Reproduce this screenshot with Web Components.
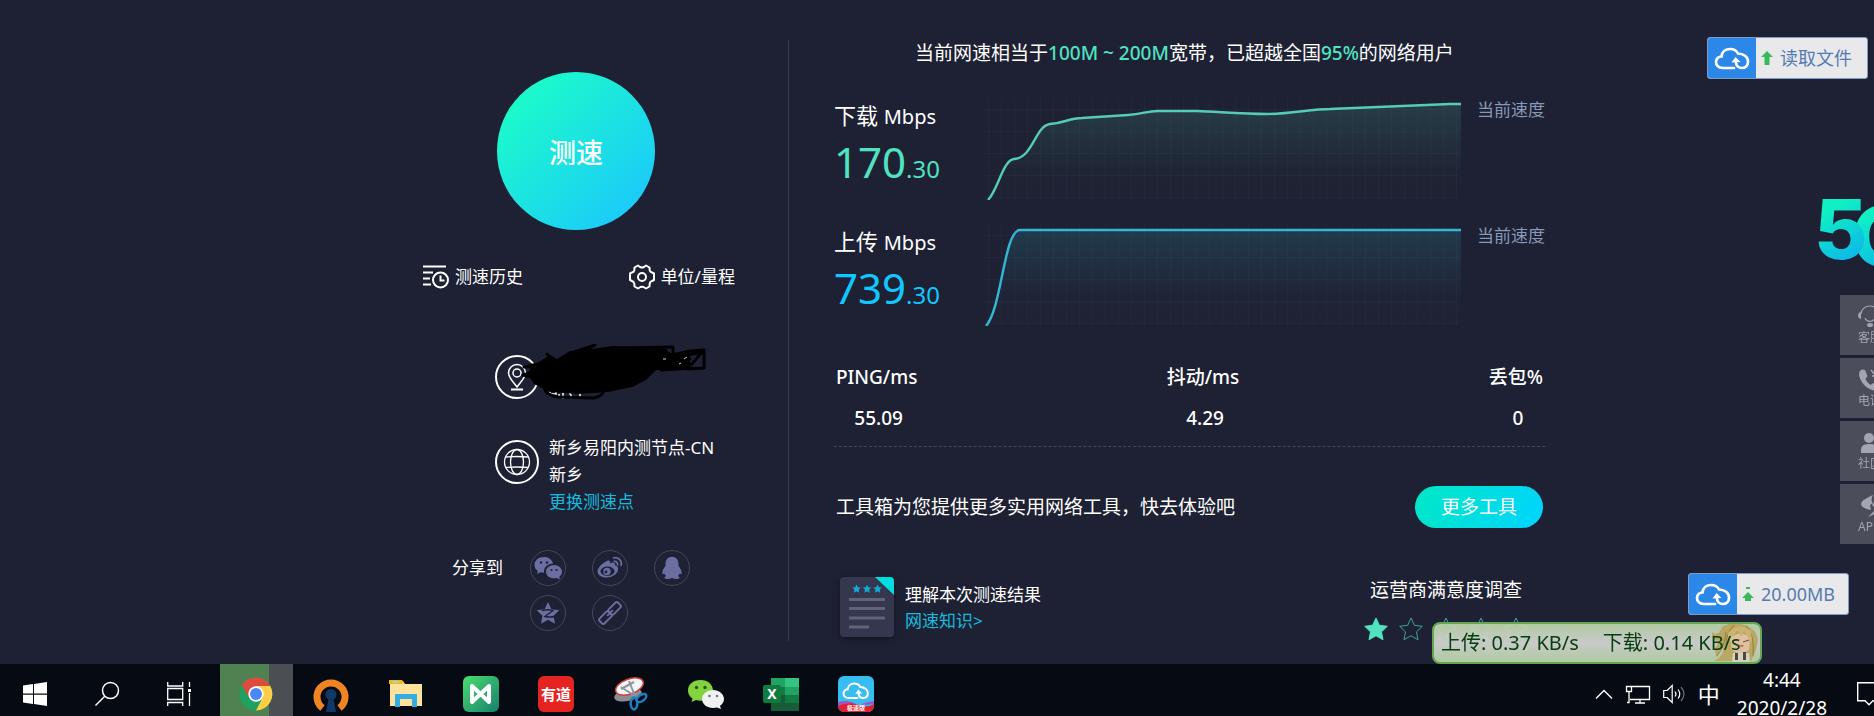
<!DOCTYPE html>
<html lang="zh-CN">
<head>
<meta charset="utf-8">
<title>测速</title>
<style>
  :root {
    --bg: #1e2133;
    --green: #50e3c2;
    --blue: #10c8ff;
    --link: #14bbdf;
  }

  * {
    box-sizing: border-box;
  }

  body {
    margin: 0;
    height: 100vh;
    display: flex;
    flex-direction: column;
    overflow: hidden;
    background: var(--bg);
    color: #fff;
    font: 17px/26px "Noto Sans", "Noto Sans CJK SC", sans-serif;
  }

  main {
    flex: 1;
    min-height: 0;
    display: grid;
    grid-template-columns: 421fr 579fr;
    padding: 40px 0 27px;
  }

  .control {
    border-right: 1px solid #3a3d4e;
    padding: 32px 53px 0 0;
    display: flex;
    justify-content: flex-end;
  }

  .control-inner {
    width: 312px;
  }

  .links {
    display: flex;
    justify-content: space-between;
    margin-top: 34px;
  }

  .places {
    display: grid;
    gap: 31px;
    margin: 59px 0 35px 72px;
  }

  .result {
    padding-left: 45px;
    width: 756px;
    max-width: 100%;
  }

  .meters {
    display: grid;
    gap: 24px;
    margin-top: 32px;
  }

  .bottom {
    display: flex;
    justify-content: space-between;
    margin-top: 49px;
    padding: 0 17px 0 6px;
  }

  .read {
    position: fixed;
    top: 37px;
    right: 6px;
  }

  .size {
    position: fixed;
    bottom: 101px;
    right: 25px;
  }
</style>
</head>
<body>
<main>
  <section class="control">
    <div class="control-inner">
      <start-button>测速</start-button>
      <nav class="links">
        <tool-link icon="history">测速历史</tool-link>
        <tool-link icon="gear">单位/量程</tool-link>
      </nav>
      <div class="places">
        <place-row icon="pin"><ink-mark></ink-mark></place-row>
        <place-row icon="globe" action="更换测速点">新乡易阳内测节点-CN<br>新乡</place-row>
      </div>
      <share-list>分享到</share-list>
    </div>
  </section>
  <section class="result">
    <result-headline></result-headline>
    <div class="meters">
      <speed-meter label="下载" whole="170" part="30" color="#50e3c2" stroke="#55cdb4"
        line="M7 102 C17 92 22 62 33 61 C52 60 54 28 69 26 C84 25 88 20 101 20 L147 17 C162 16 166 13 177 13 H216 C240 14 262 16 286 16 C310 16 330 11 349 11 L469 6 H480"></speed-meter>
      <speed-meter label="上传" whole="739" part="30" color="#10c8ff" stroke="#32b8d4"
        line="M5 102 C21 84 23 6 39 6 H480"></speed-meter>
    </div>
    <ping-stats></ping-stats>
    <more-tools>工具箱为您提供更多实用网络工具，快去体验吧</more-tools>
    <div class="bottom">
      <guide-card></guide-card>
      <rating-survey></rating-survey>
    </div>
  </section>
</main>
<upload-badge class="read" icon="up">读取文件</upload-badge>
<upload-badge class="size" icon="upstep">20.00MB</upload-badge>
<five-g></five-g>
<side-dock></side-dock>
<net-monitor></net-monitor>
<task-bar></task-bar>

<script>
const STAR = "M12 1l3.4 7.3 7.9 1-5.8 5.5 1.5 7.9L12 18.8l-7 3.9 1.5-7.9L.7 9.3l7.9-1z";
const CLOUD = `<path d="M20 21H8.500C4.500 21 2 18 2 15c0-3.200 2.500-5.500 5.500-5.500C8 4.500 12 2 16 2c4 0 6.500 1.500 8 4.500 5.500 0 10 3.500 10 8 0 4-2.500 6.500-6 6.500-3.500 0-6-2-6-5.500" fill="none" stroke="#fff" stroke-width="2.700" stroke-linecap="round"/><path d="M17.500 15.500l4-5.500 5 5z" fill="#fff"/>`;

// name: [width, height, viewBox, markup]
const ICONS = {
  history: [26, 24, "0 0 26 24", `<g fill="none" stroke="#fff" stroke-width="2"><path d="M0 1.500h23M0 7.500h10M0 13.500h7M0 19.500h8"/><circle cx="17.500" cy="15" r="7.500"/><path d="M17.500 10.500v5h4"/></g>`],
  gear: [26, 26, "0 0 26 26", `<g fill="none" stroke="#fff" stroke-width="2" stroke-linejoin="round"><path d="M9 1.500l2 1.500q2 1 4 0l2-1.500 3.500 2 .2 3q.5 1.500 2.300 2l2 1v6.500l-2 1q-2 .5-2.300 2.500l-.2 3-3.500 2-2.500-1.500q-1.500-.7-3 0L9 24.500l-3.500-2-.2-3q-.5-1.700-2.300-2.500L1 16V9.500l2-1q2-.5 2.300-2l.2-3z"/><circle cx="13" cy="13" r="4"/></g>`],
  pin: [44, 44, "0 0 44 44", `<g fill="none" stroke="#fff"><circle cx="22" cy="22" r="21" stroke-width="2"/><path d="M22 32C18 26.500 13.500 22.500 13.500 18a8.500 8.500 0 0 1 17 0C30.500 22.500 26 26.500 22 32z" stroke-width="1.500"/><circle cx="22" cy="18" r="4" stroke-width="1.500"/><path d="M16 34.500h12" stroke-width="2"/></g>`],
  globe: [44, 44, "0 0 44 44", `<g fill="none" stroke="#fff"><circle cx="22" cy="22" r="21" stroke-width="2"/><g stroke-width="1.300"><circle cx="22" cy="22" r="12.500"/><ellipse cx="22" cy="22" rx="6.500" ry="12.500"/><path d="M11 17q11-1 22 0M11 27.500q11-1 22 0"/></g></g>`],
  wechat: [28, 24, "0 0 28 24", `<g fill="#6b6ea1"><path d="M10 1C4.500 1 .5 4.500.5 9c0 2.500 1.300 4.500 3.300 6L3 18l3.500-1.800c1 .3 2.300.5 3.500.4C9.500 11 14 7.500 19 7.500 18 3.500 14.500 1 10 1z"/><path d="M20 9c-4.500 0-8 3-8 6.700s3.500 6.600 8 6.600c1 0 2-.2 2.800-.4L26 23.500l-.8-2.700C27 19.600 28 17.700 28 15.700 28 12 24.500 9 20 9z"/></g><g fill="#1e2133"><circle cx="7" cy="6.500" r="1.200"/><circle cx="13" cy="6.500" r="1.200"/><circle cx="17.500" cy="14" r="1.100"/><circle cx="22.500" cy="14" r="1.100"/></g>`],
  weibo: [26, 24, "0 0 26 24", `<path d="M10 5c2-1 3.500 0 3 2.300 3-1.300 5.500-1 5 2 2.700.8 3.500 2.500 3 4.700-.8 4.300-6 7.500-11.500 7.500C4.500 21.500.5 19 .5 15.500.5 11.500 6 6.500 10 5z" fill="#6b6ea1"/><ellipse cx="10.500" cy="15.200" rx="7" ry="4.700" fill="#1e2133"/><circle cx="10" cy="15.500" r="3.700" fill="#6b6ea1"/><circle cx="9" cy="16" r="1.400" fill="#1e2133"/><path d="M16.500 5.500c3-.5 4.500 1.500 4 4M16 2c5-1.500 9.500 2.500 8 8" fill="none" stroke="#6b6ea1" stroke-width="1.700"/>`],
  qq: [24, 24, "0 0 24 24", `<path d="M12 .8c4 0 6.500 3 6.500 7v2c1.500 2 3.300 5 3.300 7.300 0 1.400-1 1.300-2 .1-.3 1-1 2-1.800 2.800 1 .5 1.500 1 1.500 1.700 0 1.800-5.500 1.800-7 .3h-1c-1.500 1.500-7 1.500-7-.3 0-.7.5-1.200 1.500-1.700-.8-.8-1.500-1.800-1.800-2.800-1 1.200-2 1.300-2-.1 0-2.300 1.800-5.300 3.300-7.300v-2c0-4 2.500-7 6.500-7z" fill="#6b6ea1"/>`],
  qzone: [24, 24, "0 0 24 24", `<path d="${STAR}" fill="#6b6ea1"/><path d="M6 9.500q6-1.500 11 0l-8 6q5 1 9.500 0" fill="none" stroke="#1e2133" stroke-width="1.300"/>`],
  chain: [24, 24, "0 0 24 24", `<g fill="none" stroke="#6b6ea1" stroke-width="1.900" transform="rotate(-45 12 12)"><rect x="-1" y="8.500" width="13" height="7" rx="2"/><rect x="12" y="8.500" width="13" height="7" rx="2"/><path d="M8 12h8"/></g>`],
  doc: [54, 61, "0 0 54 61", `<path d="M4 0h33l17 17v39q0 4-4 4H4q-4 0-4-4V4q0-4 4-4z" fill="#34374d"/><path d="M35 0h15q4 0 4 4v14z" fill="#00dfe0"/><g fill="#13abd8"><path transform="translate(12 7) scale(.38)" d="${STAR}"/><path transform="translate(22.500 7) scale(.38)" d="${STAR}"/><path transform="translate(33 7) scale(.38)" d="${STAR}"/></g><path d="M9 22.500h36M9 31.500h36M9 41h36M9 50h20" stroke="#60637c" stroke-width="3"/>`],
  cloud: [36, 23, "0 0 36 23", CLOUD],
  up: [12, 14, "0 0 12 14", `<path d="M6 0l6 6H8.500v8h-5V6H0z" fill="#38b95c"/>`],
  upstep: [12, 14, "0 0 12 14", `<path d="M4 0h4v2H4zM6 5l6 6H9v3H3v-3H0z" fill="#38b95c"/>`],
  headset: [24, 22, "0 0 24 22", `<g fill="none" stroke="#a3a6b1" stroke-width="1.200"><path d="M3 8a9 8 0 0 1 18 0M7 12c2 4.500 8 4.500 10 0"/></g><g fill="#a3a6b1"><path d="M3 6v7q-3-.5-3-3.500T3 6zM21 6v7q3-.5 3-3.500T21 6z"/><ellipse cx="12" cy="19" rx="3" ry="2"/></g>`],
  phone: [24, 22, "0 0 24 22", `<path d="M3 1Q0 3 1.500 8c2 6 6.500 11 12.500 13 4 1 6-.5 6.500-3l-5-4-3 2Q9 13.500 7.500 10l2-3L7 1Q5 0 3 1z" fill="#a3a6b1"/><path d="M13 1l4 5M14 7h6" stroke="#a3a6b1" stroke-width="1.500"/>`],
  people: [24, 22, "0 0 24 22", `<g fill="#a3a6b1"><circle cx="11" cy="6" r="5"/><path d="M3 21v-3q0-6 7-6h3q7 0 7 6v3z"/></g>`],
  bolt: [24, 22, "0 0 24 22", `<path d="M15 0Q3 5 3 9t10 6l-1-5 3-2q-3-3 0-8zM17 6l-3 4 4 4-8 8q13-5 13-9t-6-7z" fill="#a3a6b1"/>`],
  windows: [24, 24, "0 0 24 24", `<path d="M0 3.500l10-1.400V11.500H0zM11 2l13-2v11.500H11zM0 12.700h10v9.200L0 20.500zM11 12.700h13V24L11 22z" fill="#fff"/>`],
  search: [24, 24, "0 0 24 24", `<g fill="none" stroke="#fff" stroke-width="1.500"><circle cx="15.500" cy="8.500" r="8"/><path d="M9.500 14.500L.5 23.500"/></g>`],
  taskview: [24, 24, "0 0 24 24", `<g fill="none" stroke="#fff" stroke-width="1.300"><path d="M.7 0v4h15V0M.7 6.500h15v11h-15zM.7 24v-3.500h15V24M22.500 0v5M22.500 11v13"/></g><path d="M21 7h3v3h-3z" fill="#fff"/>`],
  chrome: [34, 34, "0 0 34 34", `<circle cx="17" cy="17" r="16.500" fill="#1da261"/><path d="M17 17L2.700 8.700A16.500 16.500 0 0 1 31.300 9z" fill="#dd4b3e"/><path d="M17 9h14.300A16.500 16.500 0 0 1 17 33.500L24 20z" fill="#ffce44"/><path d="M2.700 8.700L10 21l7-4V9z" fill="#dd4b3e"/><path d="M2.700 8.700l7.400 12.500L17 25l-1 8.500A16.500 16.500 0 0 1 2.700 8.700z" fill="#1da261"/><circle cx="17" cy="17" r="7.700" fill="#fff"/><circle cx="17" cy="17" r="6" fill="#4a88f5"/>`],
  vpn: [36, 35, "0 0 36 35", `<path d="M9.500 31A14 14 0 1 1 26.500 31" fill="none" stroke="#f08423" stroke-width="7"/><circle cx="18" cy="17.500" r="5.500" fill="#113967"/><path d="M16 20h4l3 15H13z" fill="#113967"/>`],
  folder: [34, 28, "0 0 34 28", `<path d="M1 1h13l2 3h17v22H1z" fill="#ffe39a"/><path d="M0 0h13l2 3-2 1H0z" fill="#f4b722"/><path d="M3 1h7v2H3z" fill="#a9d7b0"/><path d="M6 14h22v13h-5v-8H11v8H6z" fill="#32aee6"/>`],
  mind: [36, 36, "0 0 36 36", `<defs><linearGradient id="m" x2="1" y2="1"><stop stop-color="#4bdd70"/><stop offset="1" stop-color="#16806c"/></linearGradient></defs><rect width="36" height="36" rx="6" fill="url(#m)"/><path d="M9 26V10l17 16V10L9 26z" fill="none" stroke="#fff" stroke-width="4" stroke-linejoin="round"/>`],
  youdao: [36, 36, "0 0 36 36", `<rect width="36" height="36" rx="6" fill="#e52320"/><text x="18" y="24" text-anchor="middle" font-size="15" font-weight="bold" fill="#fff">有道</text>`],
  snip: [34, 34, "0 0 34 34", `<ellipse cx="14" cy="18" rx="14" ry="6" transform="rotate(-12 14 18)" fill="#8b8d94"/><ellipse cx="15.500" cy="9.500" rx="14.500" ry="7.500" transform="rotate(-20 15.500 9.500)" fill="#f4f5f7" stroke="#cf3a35" stroke-width="1.500"/><path d="M7 12l13-7M15 4l6 15M7 10l14 9" stroke="#8f959e" stroke-width="2"/><g fill="none" stroke="#1c7fc4" stroke-width="2.500"><ellipse cx="20" cy="26.500" rx="3.300" ry="6"/><ellipse cx="27.500" cy="21" rx="3" ry="5.500" transform="rotate(-125 27.500 21)"/></g>`],
  weixin: [37, 30, "0 0 37 30", `<path d="M13.500 1C6 1 1 5.500 1 11.500c0 3.500 1.700 6 4.500 8L4.500 23l4.500-2c1.500.5 3 .7 4.500.7 7 0 12.500-4.500 12.500-10.200S21 1 13.500 1z" fill="#82d43d"/><path d="M26 11c-6 0-11 4-11 9s5 9 11 9l4-.6 4 1.600-1-3.300c2.500-1.500 4-4 4-6.700 0-5-5-9-11-9z" fill="#eff1f2"/><g fill="#34531e"><circle cx="9.500" cy="8.500" r="1.700"/><circle cx="18" cy="8.500" r="1.700"/></g><g fill="#777"><circle cx="22.500" cy="17" r="1.300"/><circle cx="30" cy="17" r="1.300"/></g>`],
  excel: [36, 33, "0 0 36 33", `<path d="M8 0h14v9H8z" fill="#21a366"/><path d="M22 0h14v9H22z" fill="#33c481"/><path d="M8 9h14v8H8z" fill="#107c41"/><path d="M22 9h14v8H22z" fill="#21a366"/><path d="M8 17h28v16H8z" fill="#185c37"/><path d="M22 17h14v8H22z" fill="#107c41"/><rect y="7" width="18" height="18" rx="2" fill="#0f7b40"/><text x="9" y="21" text-anchor="middle" font-size="14" font-weight="bold" fill="#fff">X</text>`],
  speedy: [36, 36, "0 0 36 36", `<clipPath id="s"><rect width="36" height="36" rx="6"/></clipPath><g clip-path="url(#s)"><path d="M0 0h36v36H0z" fill="#37bdf0"/><path d="M0 28q9-5 18 0t18 0v8H0z" fill="#e3202d"/><path d="M0 26q9-3 18 2-9-2-18 2zM36 25q-9 1-14 4 8 0 14-1z" fill="#9b58c0"/></g><g transform="translate(4 6) scale(.76)">${CLOUD}</g><text x="18" y="34" text-anchor="middle" font-size="6" font-weight="bold" fill="#fff">极速版</text>`],
  chevron: [18, 10, "0 0 18 10", `<path d="M1 9.500l8-8 8 8" fill="none" stroke="#fff" stroke-width="1.400"/>`],
  network: [24, 19, "0 0 24 19", `<path d="M6 1.500h17.500v13H4M9 18h10M14 14.500V18M.5 1.500h5v5h-5zM3 6.500v11H1" fill="none" stroke="#fff" stroke-width="1.300"/>`],
  volume: [22, 20, "0 0 22 20", `<g fill="none" stroke="#fff" stroke-width="1.200"><path d="M.7 6.500h3.500l5-5v17l-5-5H.7z"/><path d="M12 7.500q2 2.500 0 5M15 5.500q3.500 4.500 0 9"/><path d="M18 3q6 7 0 14" stroke="#6a6f78"/></g>`],
  notice: [28, 24, "0 0 28 24", `<path d="M.7.700h26v18H16l-4 4-4-4H.7z" fill="none" stroke="#fff" stroke-width="1.400"/>`]
};

class AppIcon extends HTMLElement {
  constructor() {
    super();
    this.attachShadow({ mode: "open" });
  }

  connectedCallback() {
    const [w, h, box, markup] = ICONS[this.getAttribute("name")];
    this.shadowRoot.innerHTML = `
      <style>
        :host { display: block; flex: none; }
        svg { display: block; overflow: visible; }
      </style>
      <svg width="${w}" height="${h}" viewBox="${box}" aria-hidden="true">${markup}</svg>
    `;
  }
}

class StartButton extends HTMLElement {
  constructor() {
    super();
    this.attachShadow({ mode: "open" });
    this.shadowRoot.innerHTML = `
      <style>
        :host {
          display: flex;
          justify-content: center;
          padding-right: 6px;
        }

        button {
          width: 158px;
          height: 158px;
          padding: 4px 0 0;
          border: 0;
          border-radius: 50%;
          background: linear-gradient(135deg, #1bfacb 15%, #1cccf8 85%);
          color: #fff;
          font: 500 27px/36px "Noto Sans", "Noto Sans CJK SC", sans-serif;
        }
      </style>
      <button type="button"><slot></slot></button>
    `;
  }
}

class ToolLink extends HTMLElement {
  constructor() {
    super();
    this.attachShadow({ mode: "open" });
  }

  connectedCallback() {
    this.shadowRoot.innerHTML = `
      <style>
        :host { display: block; }

        a {
          display: flex;
          align-items: center;
          gap: 6px;
          color: #fff;
          text-decoration: none;
        }
      </style>
      <a href="#"><app-icon name="${this.getAttribute("icon")}"></app-icon><span><slot></slot></span></a>
    `;
  }
}

class PlaceRow extends HTMLElement {
  constructor() {
    super();
    this.attachShadow({ mode: "open" });
  }

  connectedCallback() {
    const action = this.getAttribute("action");
    this.shadowRoot.innerHTML = `
      <style>
        :host {
          display: flex;
          gap: 10px;
          min-height: 54px;
          line-height: 27px;
          white-space: nowrap;
        }

        app-icon { margin-top: 6px; }

        a {
          display: block;
          color: var(--link);
          text-decoration: none;
        }
      </style>
      <app-icon name="${this.getAttribute("icon")}"></app-icon>
      <div><slot></slot>${action ? `<a href="#">${action}</a>` : ""}</div>
    `;
  }
}

// Hand-drawn pen strokes that cover the address
class InkMark extends HTMLElement {
  constructor() {
    super();
    this.attachShadow({ mode: "open" });
    this.shadowRoot.innerHTML = `
      <style>
        :host { display: block; position: relative; }
        svg { position: absolute; left: -28px; top: -5px; }
      </style>
      <svg width="190" height="60" viewBox="0 0 190 60" aria-hidden="true">
        <path d="M29 42v8M29 43h5v3h-5h6v4h-6M38 50v4M42 48v7M48 48l3 5v2M54 48h8M59 48v6" stroke="#fff" stroke-width="1.500" fill="none"/>
        <path d="M29 11l7 4 13-8 22-2 20-3 20 1 20-1 14 3 4 4 20 0v16l-34 1-10 10-14 7-24 5-30 2-28-2-16-8-6-10 3-7z"/>
        <g fill="none" stroke="#000" stroke-width="3" stroke-linejoin="round" stroke-linecap="round">
          <path d="M30 17L3 23l30-1L2 31l34 8M26 10l8 8M50 9l24-8-14 8M100 4l52-1v8l17-4 14-1v18l-16 1v-14l14-3-10 12-28 2M127 12l40-3-30 12 32-6M40 40l-15 3c-4 5 5 9 12 10l35 1c8-1 12-5 11-12M140 26l32-2"/>
        </g>
        <path d="M142 15h3M163 15l3-2M158 20l2-1" stroke="#c9cbd3"/>
      </svg>
    `;
  }
}

class ShareList extends HTMLElement {
  constructor() {
    super();
    this.attachShadow({ mode: "open" });
    const targets = [["wechat", "微信"], ["weibo", "微博"], ["qq", "QQ"], ["qzone", "QQ空间"], ["chain", "复制链接"]];
    this.shadowRoot.innerHTML = `
      <style>
        :host {
          display: flex;
          gap: 27px;
          padding-left: 29px;
          line-height: 36px;
        }

        div {
          display: grid;
          grid-template-columns: repeat(3, 36px);
          gap: 9px 26px;
        }

        a {
          height: 36px;
          box-sizing: border-box;
          display: flex;
          align-items: center;
          justify-content: center;
          border: 1px solid #444659;
          border-radius: 50%;
        }
      </style>
      <span><slot></slot></span>
      <div>${targets.map(([icon, name]) => `<a href="#" aria-label="${name}"><app-icon name="${icon}"></app-icon></a>`).join("")}</div>
    `;
  }
}

class ResultHeadline extends HTMLElement {
  constructor() {
    super();
    this.attachShadow({ mode: "open" });
    this.shadowRoot.innerHTML = `
      <style>
        :host {
          display: block;
          padding-right: 10px;
          font-size: 19px;
          text-align: center;
          white-space: nowrap;
        }

        b {
          color: var(--green);
          font-weight: 500;
        }
      </style>
      当前网速相当于<b>100M ~ 200M</b>宽带，已超越全国<b>95%</b>的网络用户
    `;
  }
}

class SpeedMeter extends HTMLElement {
  constructor() {
    super();
    this.attachShadow({ mode: "open" });
  }

  grid() {
    let d = "";
    for (let x = 7; x < 480; x += 13) d += `M${x}.5 0V102`;
    for (let y = 11; y < 102; y += 22) d += `M0 ${y}.5H478`;
    return d;
  }

  connectedCallback() {
    const line = this.getAttribute("line");
    const color = this.getAttribute("color");
    const stroke = this.getAttribute("stroke");
    this.shadowRoot.innerHTML = `
      <style>
        :host {
          display: grid;
          grid-template-columns: 147px 1fr 68px;
          height: 102px;
        }

        .name {
          font-size: 22px;
          line-height: 34px;
        }

        .name small { font-size: 20px; }

        .value {
          color: ${color};
          font-size: 42px;
          line-height: 56px;
        }

        .value small { font-size: 24px; }

        svg {
          display: block;
          width: calc(100% - 16px);
          height: 102px;
        }

        .now {
          color: #8799b8;
          line-height: 24px;
        }
      </style>
      <div>
        <div class="name">${this.getAttribute("label")} <small>Mbps</small></div>
        <div class="value">${this.getAttribute("whole")}<small>.${this.getAttribute("part")}</small></div>
      </div>
      <svg viewBox="0 0 480 102" preserveAspectRatio="none" aria-hidden="true">
        <defs>
          <linearGradient id="fade" x2="0" y2="1">
            <stop stop-color="${stroke}" stop-opacity=".16"/>
            <stop offset=".7" stop-color="${stroke}" stop-opacity=".02"/>
            <stop offset="1" stop-color="${stroke}" stop-opacity="0"/>
          </linearGradient>
        </defs>
        <path d="${this.grid()}" stroke="#fff" stroke-opacity=".025"/>
        <path d="${line}V102H7z" fill="url(#fade)"/>
        <path d="${line}" fill="none" stroke="${stroke}" stroke-width="2.400"/>
      </svg>
      <div class="now">当前速度</div>
    `;
  }
}

class PingStats extends HTMLElement {
  constructor() {
    super();
    this.attachShadow({ mode: "open" });
    this.shadowRoot.innerHTML = `
      <style>
        :host { display: block; }

        dl {
          display: flex;
          justify-content: space-between;
          margin: 38px 0 0;
          padding: 0 2px 15px;
          border-bottom: 1px dashed #444759;
          font-size: 19px;
          font-weight: 500;
          text-align: center;
        }

        dd {
          margin: 15px 0 0;
          padding-left: 4px;
        }
      </style>
      <dl>
        <div><dt>PING/ms</dt><dd>55.09</dd></div>
        <div><dt>抖动/ms</dt><dd>4.29</dd></div>
        <div><dt>丢包%</dt><dd>0</dd></div>
      </dl>
    `;
  }
}

class MoreTools extends HTMLElement {
  constructor() {
    super();
    this.attachShadow({ mode: "open" });
    this.shadowRoot.innerHTML = `
      <style>
        :host {
          display: flex;
          align-items: center;
          justify-content: space-between;
          margin-top: 39px;
          padding: 0 2px;
          font-size: 19px;
        }

        button {
          width: 128px;
          height: 42px;
          padding: 0;
          border: 0;
          border-radius: 21px;
          background: linear-gradient(120deg, #00e8c4, #00d4ff);
          color: #fff;
          font: inherit;
        }
      </style>
      <span><slot></slot></span>
      <button type="button">更多工具</button>
    `;
  }
}

class GuideCard extends HTMLElement {
  constructor() {
    super();
    this.attachShadow({ mode: "open" });
    this.shadowRoot.innerHTML = `
      <style>
        :host {
          display: flex;
          gap: 11px;
        }

        app-icon { filter: drop-shadow(0 2px 3px rgba(0, 0, 0, .4)); }

        div { padding-top: 5px; }

        a {
          display: block;
          color: var(--link);
          text-decoration: none;
        }
      </style>
      <app-icon name="doc"></app-icon>
      <div>理解本次测速结果<a href="#">网速知识&gt;</a></div>
    `;
  }
}

class RatingSurvey extends HTMLElement {
  constructor() {
    super();
    this.attachShadow({ mode: "open" });
    const stars = [1, 2, 3, 4, 5].map(n => `
      <label>
        <input type="radio" name="rate" aria-label="${n}星"${n === 1 ? " checked" : ""}>
        <svg width="24" height="24" viewBox="0 0 24 24"><path d="${STAR}"/></svg>
      </label>`).join("");
    this.shadowRoot.innerHTML = `
      <style>
        :host {
          display: block;
          font-size: 19px;
          text-align: center;
        }

        form {
          display: flex;
          gap: 11px;
          margin-top: 14px;
        }

        label {
          position: relative;
          display: block;
          height: 24px;
        }

        input {
          position: absolute;
          inset: 0;
          margin: 0;
          opacity: 0;
        }

        svg { display: block; }

        path {
          fill: none;
          stroke: #43a19b;
        }

        input:checked + svg path {
          fill: var(--green);
          stroke: var(--green);
        }
      </style>
      运营商满意度调查
      <form>${stars}</form>
    `;
  }
}

class UploadBadge extends HTMLElement {
  constructor() {
    super();
    this.attachShadow({ mode: "open" });
  }

  connectedCallback() {
    this.shadowRoot.innerHTML = `
      <style>
        :host {
          display: flex;
          box-sizing: border-box;
          width: 161px;
          height: 42px;
          border: 1px solid #7f9cc4;
          border-radius: 3px;
          overflow: hidden;
          background: #e9e9ec;
          color: #557bb0;
          font-size: 18px;
          line-height: 38px;
        }

        .logo {
          width: 48px;
          display: flex;
          align-items: center;
          justify-content: center;
          background: #2b87e8;
        }

        .state {
          display: flex;
          align-items: center;
          gap: 7px;
          padding-left: 5px;
        }
      </style>
      <div class="logo"><app-icon name="cloud"></app-icon></div>
      <div class="state"><app-icon name="${this.getAttribute("icon")}"></app-icon><slot></slot></div>
    `;
  }
}

class FiveG extends HTMLElement {
  constructor() {
    super();
    this.attachShadow({ mode: "open" });
    this.shadowRoot.innerHTML = `
      <style>
        :host {
          position: fixed;
          left: calc(100vw - 60px);
          top: 188px;
          display: flex;
          font: 800 82px/84px Inter, sans-serif;
        }

        span {
          background: linear-gradient(150deg, #10f0c4 25%, #0cb4ea 80%);
          -webkit-background-clip: text;
          background-clip: text;
          color: transparent;
        }

        .g {
          margin: 7px 0 0 -16px;
        }

        .five {
          position: relative;
          z-index: 1;
        }
      </style>
      <span class="five">5</span><span class="g">G</span>
    `;
  }
}

class SideDock extends HTMLElement {
  constructor() {
    super();
    this.attachShadow({ mode: "open" });
    const items = [["headset", "客服"], ["phone", "电话"], ["people", "社区"], ["bolt", "APP"]];
    this.shadowRoot.innerHTML = `
      <style>
        :host {
          position: fixed;
          left: calc(100vw - 34px);
          top: 295px;
          display: grid;
          gap: 3px;
        }

        a {
          box-sizing: border-box;
          width: 60px;
          height: 60px;
          padding: 11px 0 0 18px;
          background: #4b4d5b;
          color: #a3a6b1;
          font-size: 12px;
          line-height: 20px;
          text-decoration: none;
          white-space: nowrap;
        }
      </style>
      ${items.map(([icon, text]) => `<a href="#"><app-icon name="${icon}"></app-icon>${text}</a>`).join("")}
    `;
  }
}

class NetMonitor extends HTMLElement {
  constructor() {
    super();
    this.attachShadow({ mode: "open" });
    this.shadowRoot.innerHTML = `
      <style>
        :host {
          position: fixed;
          right: 112px;
          bottom: 52px;
          box-sizing: border-box;
          width: 330px;
          height: 42px;
          display: flex;
          gap: 24px;
          padding-left: 7px;
          border: 2px solid #65a553;
          border-radius: 8px;
          background: linear-gradient(rgba(188, 216, 170, .93), rgba(214, 214, 214, .93) 50%, rgba(186, 216, 168, .93));
          color: #07400e;
          font-size: 20px;
          line-height: 38px;
          white-space: nowrap;
        }

        svg {
          position: absolute;
          right: 0;
          top: 0;
        }

        span { position: relative; }
      </style>
      <svg width="48" height="38" viewBox="0 0 48 38" aria-hidden="true">
        <path d="M10 3q9-6 23-2 11 4 13 14-1 12-7 22H2q10-5 9-13-5 3-6 9Q0 25 8 17-1 17 0 8q6 5 10-5z" fill="#bba764"/>
        <path d="M14 8q-1 14-9 24M22 1q-8 8-8 20M34 2q9 8 7 30" fill="none" stroke="#917d3d"/>
        <path d="M18 14q10-8 20-1l-1 13q-8 7-17 0z" fill="#dfbfa0"/>
        <path d="M16 17L26 6l3 7 3-6 8 12-1-12Q27-3 16 9z" fill="#c9b571"/>
        <path d="M20 17l5-1M31 18l6-2" stroke="#6c4a3b"/>
        <path d="M26 21q4 4 6 0z" fill="#c46c5e"/>
        <path d="M21 29h16l1 9H20z" fill="#d5d3c0"/>
        <path d="M23 29h3v7h-3zM31 28h3v8h-3z" fill="#4a483f"/>
      </svg>
      <span>上传: 0.37 KB/s</span>
      <span>下载: 0.14 KB/s</span>
    `;
  }
}

class TaskBar extends HTMLElement {
  constructor() {
    super();
    this.attachShadow({ mode: "open" });
    const button = ([icon, name]) => `<button type="button" class="${icon}" aria-label="${name}"><app-icon name="${icon}"></app-icon></button>`;
    const system = [["windows", "开始"], ["search", "搜索"], ["taskview", "任务视图"]];
    const apps = [
      ["chrome", "Chrome"], ["vpn", "OpenVPN"], ["folder", "文件资源管理器"],
      ["mind", "思维导图"], ["youdao", "有道"], ["snip", "截图工具"],
      ["weixin", "微信"], ["excel", "Excel"], ["speedy", "极速版"]
    ];
    this.shadowRoot.innerHTML = `
      <style>
        :host {
          flex: none;
          display: flex;
          height: 60px;
          margin-bottom: -8px;
          background: #060b13;
        }

        .system, .apps, .tray {
          display: flex;
        }

        .system { margin-right: 4px; }

        .apps { gap: 2px; }

        button {
          width: 73px;
          padding: 0 2px 0 0;
          border: 0;
          background: none;
          display: flex;
          align-items: center;
          justify-content: center;
          font: inherit;
        }

        .system button { width: 72px; }

        button.chrome { background: linear-gradient(90deg, #4f8250 67%, #4b4e52 67%); }

        .tray {
          align-items: center;
          gap: 13px;
          margin: 0 -11px 0 auto;
          white-space: nowrap;
        }

        .ime { font-size: 22px; }

        time {
          margin: 0 17px 0 4px;
          font-size: 19px;
          line-height: 28px;
          text-align: center;
        }
      </style>
      <div class="system">${system.map(button).join("")}</div>
      <div class="apps">${apps.map(button).join("")}</div>
      <div class="tray">
        <app-icon name="chevron"></app-icon>
        <app-icon name="network"></app-icon>
        <app-icon name="volume"></app-icon>
        <span class="ime">中</span>
        <time>4:44<br>2020/2/28</time>
        <app-icon name="notice"></app-icon>
      </div>
    `;
  }
}

customElements.define("app-icon", AppIcon);
customElements.define("start-button", StartButton);
customElements.define("tool-link", ToolLink);
customElements.define("place-row", PlaceRow);
customElements.define("ink-mark", InkMark);
customElements.define("share-list", ShareList);
customElements.define("result-headline", ResultHeadline);
customElements.define("speed-meter", SpeedMeter);
customElements.define("ping-stats", PingStats);
customElements.define("more-tools", MoreTools);
customElements.define("guide-card", GuideCard);
customElements.define("rating-survey", RatingSurvey);
customElements.define("upload-badge", UploadBadge);
customElements.define("five-g", FiveG);
customElements.define("side-dock", SideDock);
customElements.define("net-monitor", NetMonitor);
customElements.define("task-bar", TaskBar);
</script>
</body>
</html>
